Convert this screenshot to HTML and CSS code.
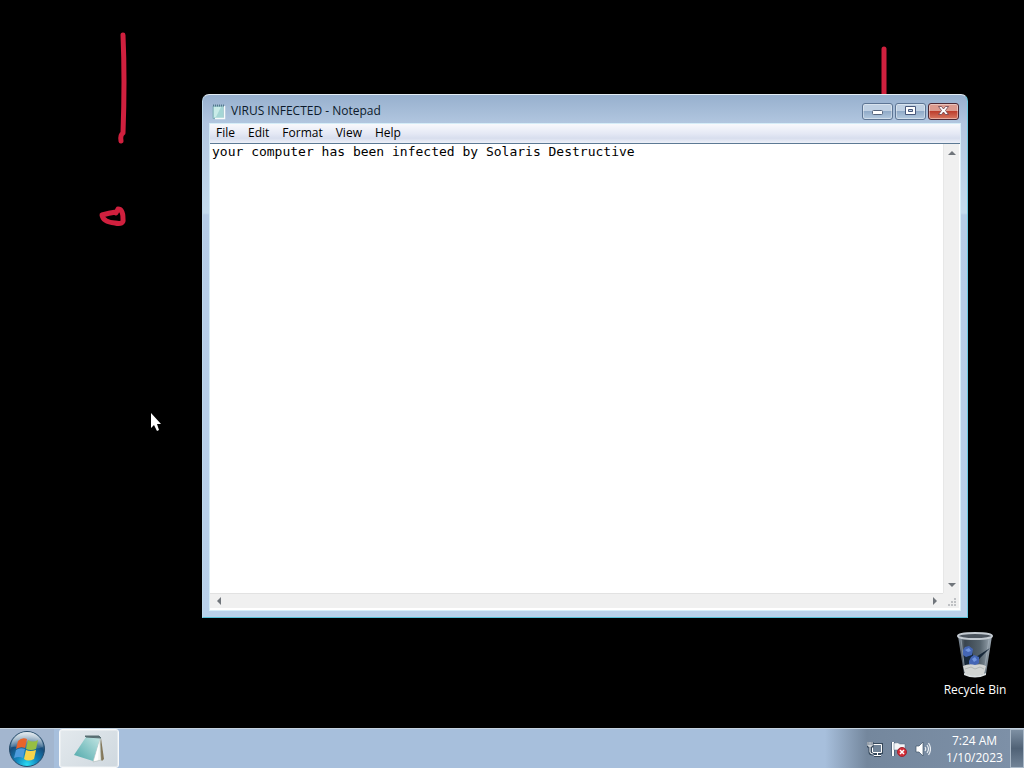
FILE: index.html
```
<!DOCTYPE html>
<html lang="en">
<head>
<meta charset="utf-8">
<title>Desktop</title>
<link rel="stylesheet" href="styles.css">
</head>
<body>
<main class="desktop">
  <svg class="scribble scribble-left" width="60" height="220" viewBox="0 0 60 220" aria-hidden="true">
    <path d="M38 10 Q40 55 38 108 Q35 110 36 116"/>
    <path d="M31 187 Q24 188 17 190 Q18 197 30 198 Q39 200 38 194 Q38 184 33 184 L31 188"/>
  </svg>
  <svg class="scribble scribble-right" width="20" height="60" viewBox="0 0 20 60" aria-hidden="true">
    <path d="M10 5V58"/>
  </svg>

  <section class="window" aria-label="VIRUS INFECTED - Notepad">
    <header class="titlebar">
      <svg class="app-icon" width="16" height="17" viewBox="0 0 16 17" aria-hidden="true">
        <path d="M2 3h11v12.500H2z" fill="#a5d6d5" stroke="#83aeb9"/>
        <path d="M3 4h7l-5 10H3z" fill="#c9ece8"/>
        <path d="M13.500 3v12.500H4" fill="none" stroke="#f7fbfb" stroke-width="1.500"/>
        <path d="M2 2.500h11" stroke="#53788d" stroke-width="2" stroke-dasharray="1 1"/>
      </svg>
      <h1 class="title">VIRUS INFECTED - Notepad</h1>
      <div class="controls">
        <button class="control" type="button" aria-label="Minimize">
          <svg width="13" height="10" viewBox="0 0 13 10"><rect x="1.500" y="4.500" width="10" height="4" rx="1" fill="#fff" stroke="#55647c"/></svg>
        </button>
        <button class="control" type="button" aria-label="Maximize">
          <svg width="13" height="10" viewBox="0 0 13 10"><path fill-rule="evenodd" d="M1.500.5h10v8h-10zM4.500 3.500v2h4v-2z" fill="#fff" stroke="#47577a"/></svg>
        </button>
        <button class="control control-close" type="button" aria-label="Close">
          <svg width="13" height="10" viewBox="0 0 13 10"><path d="M1.500.5h3l2 2.500 2-2.500h3L8.500 4.500l3 4h-3l-2-2.500-2 2.500h-3l3-4z" fill="#fff" stroke="#693f4b" stroke-width=".8"/></svg>
        </button>
      </div>
    </header>
    <div class="client">
      <nav class="menubar" aria-label="Menu">
        <button type="button">File</button>
        <button type="button">Edit</button>
        <button type="button">Format</button>
        <button type="button">View</button>
        <button type="button">Help</button>
      </nav>
      <div class="editor">
        <textarea class="text" aria-label="Text" spellcheck="false" wrap="off">your computer has been infected by Solaris Destructive</textarea>
        <div class="scroll scroll-vertical">
          <button type="button" aria-label="Scroll up"><svg width="8" height="4" viewBox="0 0 8 4"><path d="M0 4l4-4 4 4z"/></svg></button>
          <button type="button" aria-label="Scroll down"><svg width="8" height="4" viewBox="0 0 8 4"><path d="M0 0h8L4 4z"/></svg></button>
        </div>
        <div class="scroll scroll-horizontal">
          <button type="button" aria-label="Scroll left"><svg width="4" height="8" viewBox="0 0 4 8"><path d="M4 0v8L0 4z"/></svg></button>
          <button type="button" aria-label="Scroll right"><svg width="4" height="8" viewBox="0 0 4 8"><path d="M0 0l4 4-4 4z"/></svg></button>
        </div>
        <div class="grip">
          <svg width="10" height="10" viewBox="0 0 10 10" aria-hidden="true"><path d="M7 1h2v2H7zM4 4h2v2H4zM7 4h2v2H7zM1 7h2v2H1zM4 7h2v2H4zM7 7h2v2H7z" fill="#bfc1c4"/></svg>
        </div>
      </div>
    </div>
  </section>

  <a class="shortcut" href="#recycle-bin" id="recycle-bin">
    <svg width="40" height="48" viewBox="0 0 40 48" aria-hidden="true">
      <defs>
        <linearGradient id="bin" x2="1" y2="0"><stop offset="0" stop-color="#8793a0"/><stop offset=".2" stop-color="#39444e"/><stop offset=".65" stop-color="#55636d"/><stop offset="1" stop-color="#a0acb6"/></linearGradient>
      </defs>
      <path d="M3 5h34l-6 38q-11 5-22 0z" fill="url(#bin)"/>
      <path d="M6 8l4 33M34 8l-5 33" stroke="#a8b5c0" fill="none" opacity=".6"/>
      <path d="M8 20l5-3 4 4 2 6 5-3 11-7-9 9-6 7-10 3z" fill="#172839"/>
      <path d="M8 19l2-3 4-1 4 3-1 6-6 2-3-2zM14 30l2-4 3-2 5 2v6l-4 3-6-2z" fill="#4466b4"/>
      <path d="M10 19l4-2 2 3-3 1zM17 28l3-2 2 3-3 2z" fill="#7095df"/>
      <path d="M8 35q6-3 12-1 6-2 11 1l-2 8q-9 4-19 0z" fill="#d1d4d2"/>
      <path d="M10 38l6-2 4 2 5-2 4 2" stroke="#b1b7b5" fill="none"/>
      <path d="M9 42q11 5 22 0v2q-11 5-22 0z" fill="#dce1e2"/>
      <ellipse cx="20" cy="5" rx="17" ry="3" fill="#4a535d" stroke="#c4cbd2" stroke-width="2"/>
    </svg>
    <span>Recycle Bin</span>
  </a>

  <svg class="cursor" width="12" height="20" viewBox="0 0 12 20" aria-hidden="true">
    <path d="M1 1v15l3-3 3 6 2-1-2-6h4z" fill="#fff"/>
  </svg>
</main>

<footer class="taskbar">
  <button class="start" type="button" aria-label="Start">
    <svg width="38" height="38" viewBox="0 0 38 38">
      <defs>
        <radialGradient id="orb" cx=".5" cy=".95" r=".9"><stop offset="0" stop-color="#29dcf4"/><stop offset=".35" stop-color="#1386bd"/><stop offset=".7" stop-color="#174d7c"/><stop offset="1" stop-color="#8ba8bd"/></radialGradient>
        <linearGradient id="shine" x2="0" y2="1"><stop offset="0" stop-color="#fff" stop-opacity=".75"/><stop offset="1" stop-color="#fff" stop-opacity=".1"/></linearGradient>
      </defs>
      <circle cx="19" cy="19" r="17.500" fill="url(#orb)" stroke="#274c6b"/>
      <path d="M3 17a16 15 0 0 1 32 0q-7 3-16 1t-16-1z" fill="url(#shine)"/>
      <path d="M10 11q4-4 9-2l-2 9q-4-2-9 1z" fill="#e8642b"/>
      <path d="M20 10q5 3 10 0l-2 9q-5 2-10 0z" fill="#97bf43"/>
      <path d="M8 20q4-3 9-1l-2 9q-4-2-9 0z" fill="#4d9bdc"/>
      <path d="M18 20q4 2 10 0l-2 9q-6 3-10 0z" fill="#f8d44b"/>
    </svg>
  </button>
  <button class="task" type="button" aria-label="VIRUS INFECTED - Notepad">
    <svg width="34" height="30" viewBox="0 0 34 30">
      <defs><linearGradient id="pad" x1="1" x2="0" y2="1"><stop offset="0" stop-color="#c3e5e3"/><stop offset="1" stop-color="#4ca7a9"/></linearGradient></defs>
      <path d="M29 4l3 21-2 2-4-5z" fill="#84785a"/>
      <path d="M28 4l1 22-8 2z" fill="#f2f4f0" stroke="#a4b4b2" stroke-width=".5"/>
      <path d="M14 3l14 1-7 23-19-6z" fill="url(#pad)"/>
      <path d="M27 9l-5 18 4-1z" fill="#fff"/>
      <path d="M13 2h14l2 2-15-1z" fill="#596f73" stroke="#596f73"/>
    </svg>
  </button>
  <div class="tray">
    <button type="button" aria-label="Network">
      <svg width="16" height="16" viewBox="0 0 16 16"><path d="M5.500 3.500h9v8h-9z" fill="#708397" stroke="#34475a" stroke-width="3"/><path d="M7 14.500h7" stroke="#34475a" stroke-width="3"/><path d="M5.500 3.500h9v8h-9zM7 14.500h7M10.500 12v2" fill="#708397" stroke="#fff"/><path d="M1 1v4h4V1M3 5v6q0 2 3 2" fill="none" stroke="#34475a" stroke-width="3"/><path d="M1 1v4h4V1M3 1v10q0 2 3 2" fill="none" stroke="#fff"/></svg>
    </button>
    <button type="button" aria-label="Action Center">
      <svg width="16" height="16" viewBox="0 0 16 16"><path d="M2 1v14" stroke="#34475a" stroke-width="3"/><path d="M2 1v14" stroke="#fff" stroke-width="2"/><path d="M3 2q4-1 6 1h5v7q-3 1-5-1H3z" fill="#f4f5f7" stroke="#53687e" stroke-width=".5"/><circle cx="11" cy="11" r="4.500" fill="#d52e38" stroke="#9c2632"/><path d="M9 9l4 4M13 9l-4 4" stroke="#fff" stroke-width="1.500"/></svg>
    </button>
    <button type="button" aria-label="Volume">
      <svg width="16" height="16" viewBox="0 0 16 16"><path d="M1 5h3l4-4v14l-4-4H1z" fill="#fff" stroke="#3f5368" stroke-width=".7"/><path d="M10 6q1.500 2 0 4M12 4q3 4 0 8M13.500 2q4 6 0 12" fill="none" stroke="#e8edf2" stroke-width="1.200"/></svg>
    </button>
    <button class="clock" type="button"><time datetime="2023-01-10T07:24">7:24 AM<br>1/10/2023</time></button>
  </div>
  <button class="show-desktop" type="button" aria-label="Show desktop"></button>
</footer>
</body>
</html>
```

FILE: styles.css
```
* { box-sizing: border-box; }

body {
  display: flex;
  flex-direction: column;
  min-height: 100vh;
  margin: 0;
  background: #000;
  color: #000;
  font: 12px/16px "Open Sans", "Noto Sans", sans-serif;
}

button {
  display: flex;
  align-items: center;
  justify-content: center;
  margin: 0;
  padding: 0;
  border: 0;
  background: none;
  color: inherit;
  font: inherit;
}

svg { display: block; flex: none; }

.desktop {
  position: relative;
  flex: 1;
  overflow: hidden;
}

.scribble {
  position: absolute;
  fill: none;
  stroke: #d0203e;
  stroke-width: 5;
  stroke-linecap: round;
  stroke-linejoin: round;
}
.scribble-left { left: 85px; top: 25px; }
.scribble-right { left: 874px; top: 44px; }

.cursor { position: absolute; left: 150px; top: 412px; }

.window {
  position: absolute;
  inset: 94px 56px 110px 202px;
  display: flex;
  flex-direction: column;
  padding: 4px 7px 7px;
  border: 1px solid;
  border-color: #e3edf4 #6cc9e0 #54bfd5 #bdd9eb;
  border-radius: 7px 7px 0 0;
  background: linear-gradient(#97b0ce, #b1c6df 28px, #c4dbed 118px, #b5cce6 120px, #b9d1ea);
}

.titlebar {
  display: flex;
  align-items: center;
  gap: 4px;
  height: 24px;
  padding: 0 1px;
}

.title {
  flex: 1;
  margin: 0;
  color: #0c1a2b;
  font-size: 12px;
  font-weight: 400;
}

.controls { display: flex; gap: 2px; }

.control {
  width: 31px;
  height: 17px;
  border: 1px solid #5d7594;
  border-radius: 3px;
  background: linear-gradient(#bfd0e3 45%, #91abc8 50%, #b3c9df);
  box-shadow: inset 0 0 0 1px #ffffff66;
}

.control-close {
  border-color: #4b2733;
  background: linear-gradient(#dc9b8f 45%, #bd3f2e 50%, #d87862);
}

.client {
  display: flex;
  flex: 1;
  flex-direction: column;
  margin: 0 -1px -1px;
  border: 1px solid #d5edf8;
  background: #fff;
}

.menubar {
  display: flex;
  height: 20px;
  border-bottom: 1px solid #5c7994;
  background: linear-gradient(#f8f9fc, #e5e9f5 50%, #d8deee 75%, #edf0f8);
}
.menubar button { padding: 0 7px 1px 6px; }

.editor {
  display: grid;
  flex: 1;
  grid-template-rows: 1fr 15px;
  grid-template-columns: 1fr 16px;
  padding: 0 1px 2px 0;
}

.text {
  display: block;
  width: 100%;
  height: 100%;
  padding: 0 2px;
  border: 0;
  outline: 0;
  overflow: hidden;
  resize: none;
  background: #fff;
  color: #000;
  font: 13px/16px "DejaVu Sans Mono", monospace;
}

.scroll {
  display: flex;
  align-items: center;
  justify-content: space-between;
  background: #f0f0f0;
}
.scroll button { width: 17px; height: 17px; }
.scroll path { fill: #70757b; }
.scroll-vertical { flex-direction: column; border-left: 1px solid #e7e7e7; }
.scroll-horizontal { border-top: 1px solid #e2e2e2; }

.grip {
  display: flex;
  align-items: flex-end;
  justify-content: flex-end;
  padding: 1px 2px;
  background: #f0f0f0;
}

.shortcut {
  position: absolute;
  right: 8px;
  bottom: 30px;
  display: flex;
  flex-direction: column;
  align-items: center;
  gap: 3px;
  width: 82px;
  color: #fff;
  text-decoration: none;
  white-space: nowrap;
}

.taskbar {
  display: flex;
  height: 40px;
  border-top: 1px solid #c5d3e0;
  background: #a7bfdc;
}

.start { width: 54px; background: #a3b6cf; }

.task {
  width: 60px;
  margin-left: 5px;
  border: 1px solid #f8fafb;
  border-radius: 3px;
  background: linear-gradient(135deg, #e3e9ed, #cfd8df);
  box-shadow: inset 0 0 0 1px #ffffff55;
}

.tray {
  display: flex;
  align-items: center;
  gap: 8px;
  margin-left: auto;
  padding-left: 42px;
  background: linear-gradient(90deg, #a7bfdc, #74879d 42px, #7d90a7);
}

.clock {
  width: 71px;
  color: #fff;
  line-height: 17px;
}

.show-desktop {
  width: 14px;
  border: 1px solid #aab9c8;
  background: linear-gradient(#7e90a3, #506276 50%, #718397);
}
```
